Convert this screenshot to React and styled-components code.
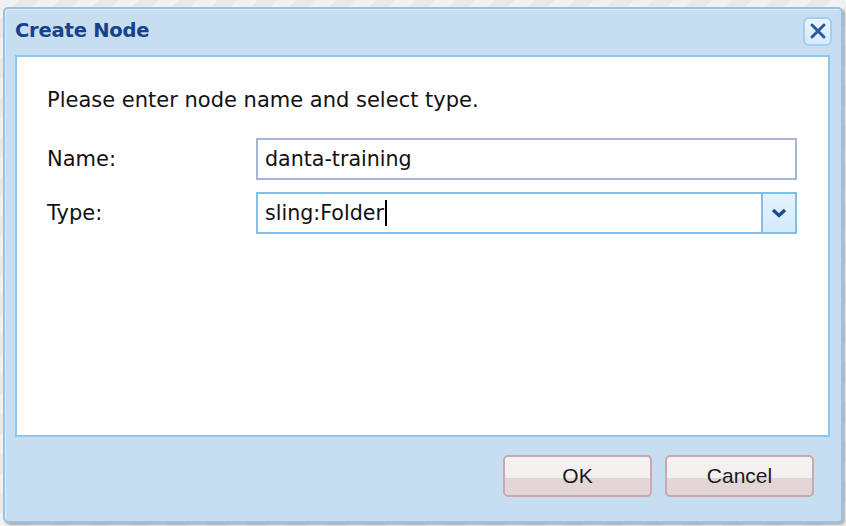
import styled, { createGlobalStyle } from "styled-components"

const Global = createGlobalStyle`
    html, body {
        margin: 0;
        padding: 0;
        width: 846px;
        height: 526px;
        overflow: hidden;
        background: repeating-linear-gradient(135deg, #f1f1f1 0px, #f1f1f1 14px, #e9e9e9 14px, #e9e9e9 28px);
    }
`

const Window = styled.div`
    box-sizing: border-box;
    margin: 7px 0 0 3px;
    width: 840px;
    height: 516px;
    background-color: #c7ddf0;
    border: 2px solid #99c2e8;
    border-radius: 5px;
    box-shadow: inset 1px 1px 0 #e2eef9, 2px 2px 2px rgba(0, 0, 0, 0.25);
    display: flex;
    flex-direction: column;
    font-family: "DejaVu Sans", Tahoma, sans-serif;
`

const Header = styled.div`
    box-sizing: border-box;
    height: 46px;
    display: flex;
    align-items: center;
    justify-content: space-between;
    padding: 0 9px 4px 10px;
`

const Title = styled.h1`
    margin: 0;
    font-size: 19.5px;
    font-weight: bold;
    color: #15428b;
    letter-spacing: -0.2px;
`

const CloseButton = styled.button`
    box-sizing: border-box;
    width: 29px;
    height: 29px;
    padding: 0;
    border: 2px solid #a4cdf0;
    border-radius: 6px;
    background: linear-gradient(#eaf5fd, #d4eafb);
    display: flex;
    align-items: center;
    justify-content: center;
    margin-top: 2px;
`

const Panel = styled.div`
    box-sizing: border-box;
    margin: 0 11px 0 10px;
    height: 382px;
    background: #fff;
    border: 2px solid #8ec5ee;
    padding: 31px 30px 0 30px;
`

const Intro = styled.p`
    margin: 0 0 25px 0;
    font-size: 21px;
    line-height: 25px;
    color: #111;
`

const Row = styled.div`
    display: grid;
    grid-template-columns: 209px 541px;
    align-items: center;
    margin-bottom: 12px;
`

const Label = styled.label`
    font-size: 21px;
    color: #111;
`

const Field = styled.div`
    box-sizing: border-box;
    height: 42px;
    display: flex;
    align-items: stretch;
    border: 2px solid ${p => (p.$focus ? "#7dc0ea" : "#aab4da")};
    background: #fff;
`

const FieldText = styled.div`
    flex: 1;
    display: flex;
    align-items: center;
    padding-left: 7px;
    font-size: 20.6px;
    color: #111;
`

const Caret = styled.span`
    display: inline-block;
    width: 2px;
    height: 26px;
    background: #000;
    margin-left: 1px;
`

const Trigger = styled.div`
    width: 32px;
    border-left: 2px solid #7dc0ea;
    background: linear-gradient(#e4f3fe, #d3ebfc);
    display: flex;
    align-items: center;
    justify-content: center;
`

const Footer = styled.div`
    flex: 1;
    display: flex;
    justify-content: flex-end;
    align-items: flex-start;
    gap: 13px;
    padding: 18px 27px 0 0;
`

const Button = styled.button`
    box-sizing: border-box;
    width: 149px;
    height: 42px;
    border: 2px solid #c9a9ab;
    border-radius: 5px;
    background: linear-gradient(#f6f2f2 0%, #f3efef 56%, #e4d6d7 56%, #e3d5d6 100%);
    font-family: "Liberation Sans", Arial, sans-serif;
    font-size: 21px;
    color: #1a1a1a;
    padding: 0;
`

export default function App() {
    return (
        <>
            <Global />
            <Window>
                <Header>
                    <Title>Create Node</Title>
                    <CloseButton>
                        <svg width="18" height="18" viewBox="0 0 18 18">
                            <path d="M3 3 L15 15 M15 3 L3 15" stroke="#2d5a9e" strokeWidth="3" strokeLinecap="round" />
                        </svg>
                    </CloseButton>
                </Header>
                <Panel>
                    <Intro>Please enter node name and select type.</Intro>
                    <Row>
                        <Label>Name:</Label>
                        <Field>
                            <FieldText>danta-training</FieldText>
                        </Field>
                    </Row>
                    <Row>
                        <Label>Type:</Label>
                        <Field $focus>
                            <FieldText>sling:Folder<Caret /></FieldText>
                            <Trigger>
                                <svg width="16" height="10" viewBox="0 0 16 10">
                                    <path d="M2 2 L8 7.5 L14 2" fill="none" stroke="#1f4d8c" strokeWidth="3.4" strokeLinejoin="miter" />
                                </svg>
                            </Trigger>
                        </Field>
                    </Row>
                </Panel>
                <Footer>
                    <Button>OK</Button>
                    <Button>Cancel</Button>
                </Footer>
            </Window>
        </>
    )
}
